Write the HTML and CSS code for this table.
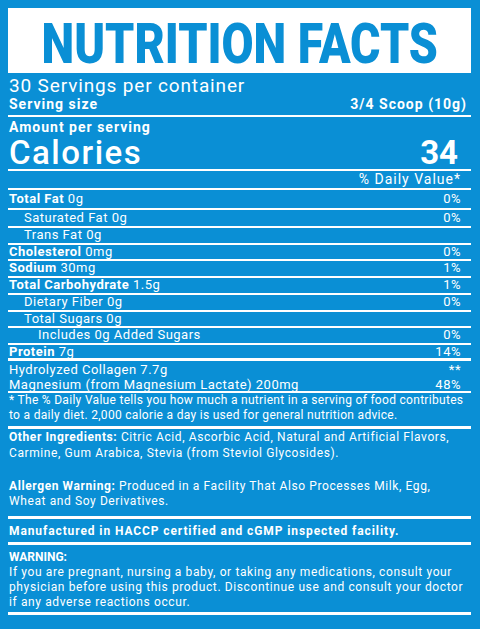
FILE: index.html
```html
<!DOCTYPE html>
<html lang="en">

<head>
    <meta charset="UTF-8">
    <meta name="viewport" content="width=device-width, initial-scale=1.0">
    <title>Nutrition Facts</title>
    <link rel="stylesheet" href="styles.css">
</head>

<body>

    <div class="label">
        <div class="titulo"><span>NUTRITION FACTS</span></div>

        <div class="servings">30 Servings per container</div>
        <div class="linha-dupla bold borda">
            <span>Serving size</span>
            <span>3/4 Scoop (10g)</span>
        </div>

        <div class="amount bold">Amount per serving</div>
        <div class="calorias borda">
            <span class="cal-nome">Calories</span>
            <span class="cal-valor">34</span>
        </div>
        <div class="dv borda">% Daily Value*</div>

        <div class="row r1 borda"><span><b>Total Fat</b> 0g</span><span>0%</span></div>
        <div class="row r2 borda recuo"><span>Saturated Fat 0g</span><span>0%</span></div>
        <div class="row borda recuo"><span>Trans Fat 0g</span><span></span></div>
        <div class="row borda"><span><b>Cholesterol</b> 0mg</span><span>0%</span></div>
        <div class="row borda"><span><b>Sodium</b> 30mg</span><span>1%</span></div>
        <div class="row borda"><span><b>Total Carbohydrate</b> 1.5g</span><span>1%</span></div>
        <div class="row borda recuo"><span>Dietary Fiber 0g</span><span>0%</span></div>
        <div class="row borda recuo"><span>Total Sugars 0g</span><span></span></div>
        <div class="row borda recuo2"><span>Includes 0g Added Sugars</span><span>0%</span></div>
        <div class="row proteina borda-grossa"><span><b>Protein</b> 7g</span><span>14%</span></div>
        <div class="row colageno"><span>Hydrolyzed Collagen 7.7g</span><span>**</span></div>
        <div class="row magnesio borda"><span>Magnesium (from Magnesium Lactate) 200mg</span><span>48%</span></div>

        <p class="nota borda-grossa">* The % Daily Value tells you how much a nutrient in a serving of food contributes
            to a daily diet. 2,000 calorie a day is used for general nutrition advice.</p>

        <p class="texto"><b>Other Ingredients:</b> Citric Acid, Ascorbic Acid, Natural and Artificial Flavors,
            Carmine, Gum Arabica, Stevia (from Steviol Glycosides).</p>

        <p class="alergia borda-grossa"><b>Allergen Warning:</b> Produced in a Facility That Also Processes Milk, Egg,
            Wheat and Soy Derivatives.</p>

        <p class="fabrica bold borda-grossa">Manufactured in HACCP certified and cGMP inspected facility.</p>

        <div class="aviso borda-grossa">
            <div class="bold">WARNING:</div>
            <p>If you are pregnant, nursing a baby, or taking any medications, consult your
                physician before using this product. Discontinue use and consult your doctor
                if any adverse reactions occur.</p>
        </div>
    </div>

</body>

</html>
```

FILE: styles.css
```css
body {
    background-color: #0a8fd5;
    color: #fff;
    font-family: Roboto, "DejaVu Sans", sans-serif;
    margin: 8px;
}

.label {
    width: 463px;
}

.titulo {
    background-color: #fff;
    color: #0a8fd5;
    height: 65px;
    display: flex;
    justify-content: center;
    align-items: flex-start;
    font-size: 56px;
    font-weight: 900;
    white-space: nowrap;
}

.titulo span {
    line-height: 56px;
    padding-top: 7.5px;
    transform: scaleX(0.83);
}

.bold,
b {
    font-weight: bold;
}

.borda {
    border-bottom: 2px solid #fff;
}

.borda-grossa {
    border-bottom: 3px solid #fff;
}

p {
    margin: 0;
}

.servings {
    font-size: 19px;
    line-height: 20px;
    letter-spacing: 0.85px;
    margin-top: 3px;
    padding-left: 1px;
}

.linha-dupla {
    display: flex;
    justify-content: space-between;
    font-size: 14px;
    line-height: 17px;
    letter-spacing: 1px;
    padding: 0 4px 2px 1px;
}

.amount {
    font-size: 14px;
    line-height: 18px;
    letter-spacing: 1px;
    padding: 1px 0 0 1px;
}

.calorias {
    display: flex;
    justify-content: space-between;
    align-items: baseline;
    height: 32px;
    line-height: 32px;
    margin-top: 1px;
    padding: 0 13px 0 1px;
}

.cal-nome {
    font-size: 33px;
    font-weight: 500;
    letter-spacing: 1.5px;
}

.cal-valor {
    font-size: 33px;
    font-weight: bold;
}

.dv {
    text-align: right;
    font-size: 14px;
    line-height: 17px;
    letter-spacing: 1px;
    padding-right: 10px;
}

.row {
    display: flex;
    justify-content: space-between;
    font-size: 13px;
    line-height: 14.7px;
    letter-spacing: 0.5px;
    padding: 0 10px 0 1px;
}

.r1 {
    line-height: 17.5px;
}

.r2 {
    line-height: 16.5px;
}

.recuo {
    padding-left: 16px;
}

.recuo2 {
    padding-left: 30px;
}

.proteina {
    line-height: 13px;
}

.colageno {
    line-height: 18px;
}

.magnesio {
    line-height: 12px;
}

.nota {
    font-size: 12px;
    line-height: 15.5px;
    letter-spacing: 0.3px;
    padding: 0 0 2px 1px;
}

.texto {
    font-size: 12px;
    line-height: 16.5px;
    letter-spacing: 0.6px;
    padding-left: 1px;
}

.alergia {
    font-size: 12px;
    line-height: 15px;
    letter-spacing: 0.6px;
    margin-top: 17px;
    padding: 0 0 7px 1px;
}

.fabrica {
    font-size: 12px;
    line-height: 15px;
    letter-spacing: 0.9px;
    padding: 5.5px 0 3px 1px;
}

.aviso {
    font-size: 12px;
    line-height: 14.8px;
    padding: 5px 0 2.5px 1px;
}

.aviso p {
    letter-spacing: 0.62px;
}
```
